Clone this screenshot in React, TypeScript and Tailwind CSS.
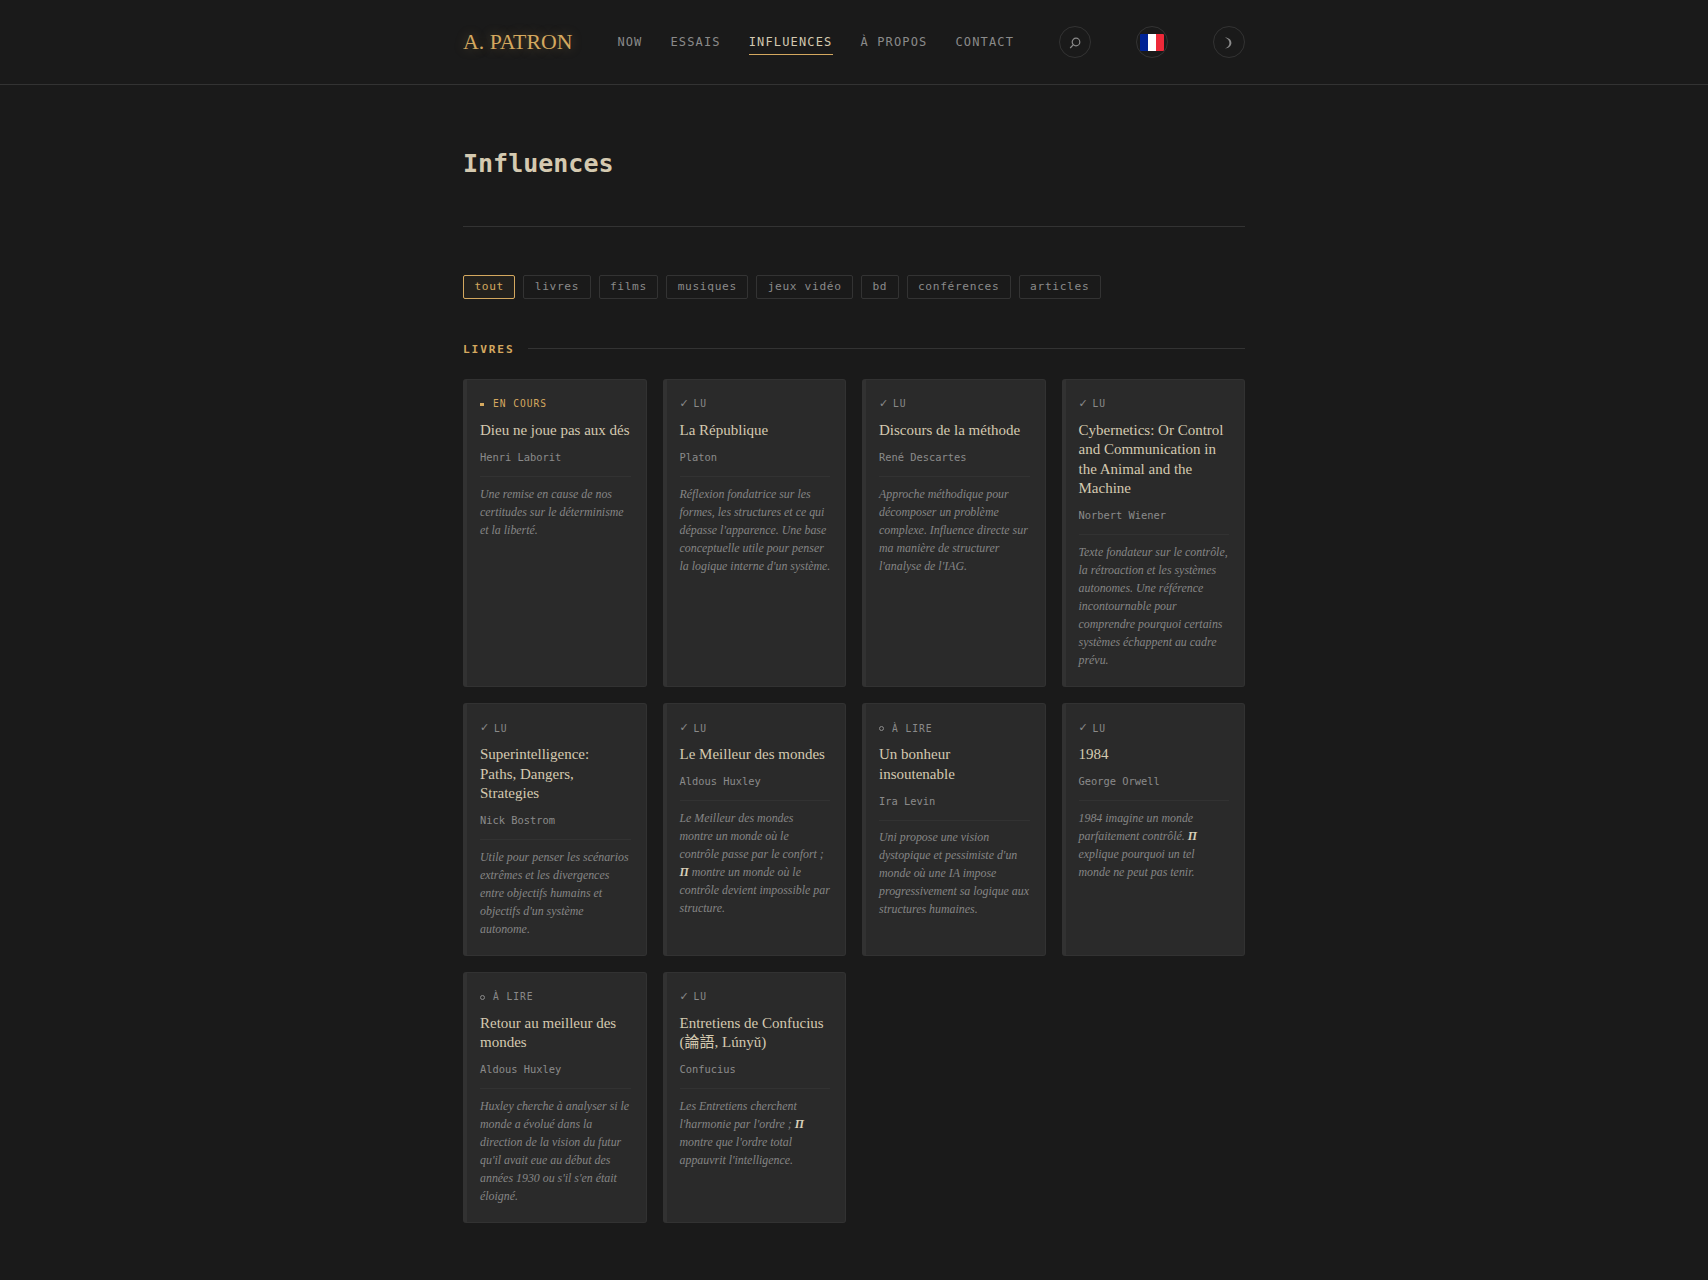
const mono = "font-['DejaVu_Sans_Mono','Liberation_Mono',monospace]";
const serif = "font-['Liberation_Serif','Noto_Sans_CJK_TC',serif]";

const NAV = ["NOW", "ESSAIS", "INFLUENCES", "À PROPOS", "CONTACT"];
const FILTERS = ["tout", "livres", "films", "musiques", "jeux vidéo", "bd", "conférences", "articles"];

type Book = { status: "cours" | "lu" | "lire"; title: React.ReactNode; author: string; note: React.ReactNode };

const Pi = () => <strong className="font-bold text-[#d8cfb8]">Π</strong>;

const BOOKS: Book[] = [
  { status: "cours", title: "Dieu ne joue pas aux dés", author: "Henri Laborit", note: "Une remise en cause de nos certitudes sur le déterminisme et la liberté." },
  { status: "lu", title: "La République", author: "Platon", note: <>Réflexion fondatrice sur les formes, les structures et ce qui dépasse l'apparence. Une base conceptuelle utile pour penser <span className="whitespace-nowrap">la logique interne d'un système.</span></> },
  { status: "lu", title: "Discours de la méthode", author: "René Descartes", note: "Approche méthodique pour décomposer un problème complexe. Influence directe sur ma manière de structurer l'analyse de l'IAG." },
  { status: "lu", title: "Cybernetics: Or Control and Communication in the Animal and the Machine", author: "Norbert Wiener", note: "Texte fondateur sur le contrôle, la rétroaction et les systèmes autonomes. Une référence incontournable pour comprendre pourquoi certains systèmes échappent au cadre prévu." },
  { status: "lu", title: <>Superintelligence:<br />Paths, Dangers,<br />Strategies</>, author: "Nick Bostrom", note: "Utile pour penser les scénarios extrêmes et les divergences entre objectifs humains et objectifs d'un système autonome." },
  { status: "lu", title: "Le Meilleur des mondes", author: "Aldous Huxley", note: <>Le Meilleur des mondes<br />montre un monde où le contrôle passe par le confort ;<br /><Pi /> montre un monde où le contrôle devient impossible par structure.</> },
  { status: "lire", title: "Un bonheur insoutenable", author: "Ira Levin", note: "Uni propose une vision dystopique et pessimiste d'un monde où une IA impose progressivement sa logique aux structures humaines." },
  { status: "lu", title: "1984", author: "George Orwell", note: <>1984 imagine un monde parfaitement contrôlé. <Pi /> explique pourquoi un tel monde ne peut pas tenir.</> },
  { status: "lire", title: "Retour au meilleur des mondes", author: "Aldous Huxley", note: "Huxley cherche à analyser si le monde a évolué dans la direction de la vision du futur qu'il avait eue au début des années 1930 ou s'il s'en était éloigné." },
  { status: "lu", title: "Entretiens de Confucius (論語, Lúnyǔ)", author: "Confucius", note: <>Les Entretiens cherchent l'harmonie par l'ordre ; <Pi /> montre que l'ordre total appauvrit l'intelligence.</> },
];

function Status({ status }: { status: Book["status"] }) {
  const base = `${mono} flex items-center h-[13px] text-[9.6px] tracking-[0.96px]`;
  if (status === "cours") {
    return (
      <div className={`${base} text-[#d4a85f]`}>
        <span className="w-[4px] h-[3px] bg-[#d4a85f] mr-[9px]" />EN COURS
      </div>
    );
  }
  if (status === "lire") {
    return (
      <div className={`${base} text-[#8a8a8a]`}>
        <span className="w-[5px] h-[5px] rounded-full border border-[#8a8a8a] mr-[8px]" />À LIRE
      </div>
    );
  }
  return (
    <div className={`${base} text-[#8a8a8a]`}>
      <span className="w-[14px] text-[11px] font-['DejaVu_Sans',sans-serif]">✓</span>LU
    </div>
  );
}

function Card({ book }: { book: Book }) {
  return (
    <div className="bg-[#2a2a2a] border border-[#323232] border-l-[4px] rounded-[3px] pl-[13px] pr-[15px] pt-[18px] pb-[17.5px]">
      <Status status={book.status} />
      <h3 className={`${serif} mt-[10px] text-[15px] leading-[19.4px] text-[#d4c9b0]`}>{book.title}</h3>
      <p className={`${mono} mt-[9.6px] text-[10.4px] leading-[14px] text-[#8a8a8a]`}>{book.author}</p>
      <p className={`${serif} mt-[12px] pt-[7.5px] border-t border-[#323232] italic text-[11.9px] leading-[18px] text-[#858585]`}>{book.note}</p>
    </div>
  );
}

export default function App() {
  return (
    <div className="min-h-[1280px] bg-[#1a1a1a]">
      <header className="h-[85px] border-b border-[#333333]">
        <div className="w-[782px] mx-auto h-full flex items-center justify-between">
          <span className={`${serif} text-[21.8px] text-[#d4a85f] [text-shadow:0_0_12px_rgba(212,168,95,0.35)]`}>A. PATRON</span>
          <nav className={`${mono} mt-[4px] flex gap-[28px] text-[12px] leading-[16px] tracking-[1.15px] text-[#8a8a8a]`}>
            {NAV.map((item) => (
              <a key={item} className={item === "INFLUENCES" ? "pb-[4px] border-b border-[#d4a85f] text-[#d4c9b0]" : "pb-[4px] border-b border-transparent"}>{item}</a>
            ))}
          </nav>
          <button className="w-[32px] h-[32px] rounded-full border border-[#333333] flex items-center justify-center text-[#8a8a8a]">
            <svg width="12" height="12" viewBox="0 0 12 12" fill="none" stroke="currentColor" strokeWidth="1.2" className="mt-[1px]">
              <circle cx="7" cy="5" r="3.8" />
              <path d="M4.2 7.8 1.2 11" />
            </svg>
          </button>
          <button className="w-[32px] h-[32px] rounded-full border border-[#333333] flex items-center justify-center">
            <span className="flex w-[24px] h-[17px] rounded-[1px] overflow-hidden">
              <span className="flex-1 bg-[#002395]" />
              <span className="flex-1 bg-white" />
              <span className="flex-1 bg-[#ed2939]" />
            </span>
          </button>
          <button className="w-[32px] h-[32px] rounded-full border border-[#333333] flex items-center justify-center text-[#8a8a8a]">
            <svg width="9" height="12" viewBox="0 0 9 12" fill="currentColor" className="mt-[2px]">
              <path d="M1 .6C4.600.6 7.400 3 7.400 6s-2.800 5.400-6.400 5.400C3.800 10.200 5.400 8.400 5.400 6S3.800 1.800 1 .6z" />
            </svg>
          </button>
        </div>
      </header>

      <main className="w-[782px] mx-auto">
        <h1 className={`${mono} mt-[61px] text-[25px] leading-[36px] font-semibold text-[#d4c9b0]`}>Influences</h1>
        <div className="mt-[44px] border-t border-[#333333]" />

        <div className="mt-[48px] flex gap-[8px]">
          {FILTERS.map((f) => (
            <button
              key={f}
              className={`${mono} h-[24px] pt-[1px] px-[10.4px] rounded-[2px] border text-[11.2px] tracking-[0.66px] ${f === "tout" ? "border-[#d4a85f] text-[#d4a85f] bg-[#d4a85f]/5" : "border-[#333333] text-[#8a8a8a]"}`}
            >
              {f}
            </button>
          ))}
        </div>

        <div className="mt-[40px] flex items-center gap-[13px]">
          <h2 className={`${mono} pt-[3px] text-[11.2px] leading-[16px] font-bold tracking-[1.85px] text-[#d4a85f]`}>LIVRES</h2>
          <div className="flex-1 border-t border-[#333333]" />
        </div>

        <div className="mt-[21px] grid grid-cols-4 gap-[16px]">
          {BOOKS.map((b) => (
            <Card key={b.author + b.status} book={b} />
          ))}
        </div>
      </main>
    </div>
  );
}
